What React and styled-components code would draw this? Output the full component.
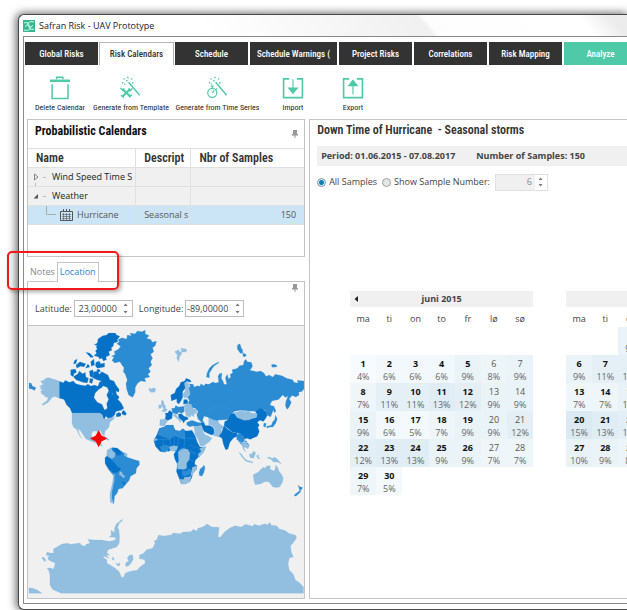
import React, { useState } from 'react';
import styled, { createGlobalStyle } from 'styled-components';

const GlobalStyle = createGlobalStyle`
    *{
        box-sizing: border-box;
    }
    body{
        margin: 0;
        background: #fff;
        overflow: hidden;
        font-family: "Open Sans", "Noto Sans", sans-serif;
        font-size: 9px;
        line-height: 12px;
        color: #444;
    }
    button, input{
        font: inherit;
        color: inherit;
        margin: 0;
        padding: 0;
        border: 0;
        background: none;
    }
    h1, h2, p{
        margin: 0;
    }
    svg{
        display: block;
    }
`

const headFont = '"Roboto Condensed", Roboto, sans-serif';
const green = '#4fcaa8';

const Page = styled.div`
    padding: 14px 0 2px 18px;
`

const Window = styled.div`
    min-height: calc(100vh - 16px);
    display: flex;
    flex-direction: column;
    padding: 0 0 5px 4px;
    border: 1px solid #484848;
    border-right: 0;
    border-radius: 6px 0 0 6px;
    background: #fff;
    box-shadow: -1px 0 8px 1px rgba(0, 0, 0, .6);
`

const TitleBar = styled.header`
    height: 21px;
    display: flex;
    align-items: center;
    gap: 4px;
    background: linear-gradient(50deg, #fff 30%, #f0f0f0 66%, #fdfdfd 67%, #fff 92%, #ececec 97%);
    h1{
        font-size: 9px;
        font-weight: 400;
        color: #222;
    }
`

const Client = styled.div`
    flex: 1;
    display: flex;
    flex-direction: column;
    border: 1px solid #8a8a8a;
    border-right: 0;
    padding: 5px 0 4px 0;
    background: #fff;
`

const TabBar = styled.nav`
    display: flex;
    gap: 2px;
    padding: 0 0 0 1px;
    overflow: hidden;
`

const Tab = styled.button`
    flex: none;
    width: ${({ $wide }) => ($wide ? 87 : 73)}px;
    height: 23px;
    overflow: hidden;
    white-space: nowrap;
    font-family: ${headFont};
    font-size: 9px;
    font-weight: 500;
    color: ${({ $active }) => ($active ? '#333' : '#fff')};
    background: ${({ $active, $accent }) => ($active ? '#fff' : $accent ? green : '#333')};
    box-shadow: ${({ $active }) => ($active ? 'inset 0 1px #b5b5b5, 0 0 0 1px #b5b5b5' : 'none')};
    clip-path: inset(0 -1px 0 -1px);
`

const Toolbar = styled.div`
    display: flex;
    padding: 11px 6px 5px;
    height: 54px;
`

const Tool = styled.button`
    flex: none;
    width: ${({ $width }) => $width}px;
    display: flex;
    flex-direction: column;
    align-items: center;
    gap: 2px;
    white-space: nowrap;
    font-family: ${headFont};
    font-size: 8px;
    color: #222;
`

const Workspace = styled.main`
    flex: 1;
    display: grid;
    grid-template-columns: minmax(0, 7fr) minmax(0, 8fr);
    gap: 4px;
    padding-left: 3px;
`

const Column = styled.div`
    display: flex;
    flex-direction: column;
`

const Panel = styled.section`
    border: 1px solid #c4c4c4;
    background: #fff;
    ${({ $grow }) => $grow && 'flex: 1;'}
    ${({ $open }) => $open && 'border-right: 0;'}
`

const PanelHead = styled.div`
    display: flex;
    align-items: center;
    justify-content: space-between;
    height: 28px;
    padding: 0 6px 7px 7px;
    h2{
        font-family: ${headFont};
        font-size: 12px;
        font-weight: 700;
        color: #111;
    }
    svg{
        margin-top: 6px;
    }
`

const TreeTable = styled.table`
    width: 100%;
    margin-bottom: 31px;
    table-layout: fixed;
    border-collapse: collapse;
    th, td{
        height: 19px;
        padding: 0 8px;
        overflow: hidden;
        white-space: nowrap;
        text-align: left;
        border: 1px solid #e0e0e0;
    }
    th{
        font-family: ${headFont};
        font-size: 12px;
        font-weight: 600;
        color: #333;
    }
    th:first-child, td:first-child{
        border-left: 0;
    }
    th:last-child, td:last-child{
        border-right: 0;
    }
    td:first-child{
        padding: 0;
    }
`

const TreeRow = styled.tr`
    background: ${({ $selected }) => ($selected ? '#cce5f6' : '#f0f0f0')};
    color: ${({ $selected }) => ($selected ? '#555' : '#222')};
    td:last-child{
        text-align: right;
    }
`

const TreeCell = styled.div`
    display: flex;
    align-items: center;
    gap: ${({ $child }) => ($child ? 4 : 0)}px;
    padding-left: ${({ $child }) => ($child ? 18 : 5)}px;
`

const Toggle = styled.button`
    display: flex;
    width: 19px;
`

const LowerTabs = styled.div`
    position: relative;
    display: flex;
    align-items: flex-end;
    height: 25px;
    margin-bottom: -1px;
    padding-left: 2px;
`

const LowerTab = styled.button`
    height: 20px;
    padding: 0 ${({ $active }) => ($active ? 2 : 0)}px 1px;
    margin-right: 1px;
    color: ${({ $active }) => ($active ? '#2a86d0' : '#888')};
    background: #fff;
    border: 1px solid ${({ $active }) => ($active ? '#c4c4c4' : 'transparent')};
    border-bottom: ${({ $active }) => ($active ? '0' : '1px solid #c4c4c4')};
`

const Callout = styled.div`
    position: absolute;
    left: -20px;
    top: -6px;
    width: 112px;
    height: 39px;
    border: 2px solid #f01818;
    border-radius: 5px;
    box-shadow: 2px 2px 4px rgba(0, 0, 0, .35);
    pointer-events: none;
`

const PinRow = styled.div`
    display: flex;
    justify-content: flex-end;
    padding: 2px 6px 0 0;
`

const CoordRow = styled.form`
    display: flex;
    align-items: center;
    gap: 2px;
    padding: 0 7px;
    height: 33px;
    label + div + label{
        margin-left: 4px;
    }
`

const SpinBox = styled.div`
    display: flex;
    flex: none;
    width: ${({ $small }) => ($small ? 53 : 59)}px;
    height: 17px;
    border: 1px solid ${({ $off }) => ($off ? '#e0e0e0' : '#bdbdbd')};
    background: ${({ $off }) => ($off ? '#f0f0f0' : '#fff')};
    color: ${({ $off }) => ($off ? '#888' : '#444')};
    input{
        flex: 1;
        min-width: 0;
        text-align: right;
        padding-right: 3px;
    }
`

const Arrows = styled.div`
    width: 12px;
    display: flex;
    flex-direction: column;
    background: #fff;
    button{
        flex: 1;
        display: flex;
        align-items: center;
        justify-content: center;
    }
`

const MapBox = styled.div`
    border-top: 1px solid #c4c4c4;
    background: #f0f0f0;
    svg{
        width: 100%;
    }
`

const Details = styled.div`
    padding: 4px 0 0 7px;
    overflow: hidden;
    h2{
        height: 22px;
        font-family: ${headFont};
        font-size: 12px;
        font-weight: 600;
        white-space: pre;
        color: #333;
    }
`

const PeriodBar = styled.div`
    display: flex;
    align-items: center;
    gap: 21px;
    height: 20px;
    padding-left: 4px;
    background: #f0f0f0;
    font-weight: 700;
    white-space: nowrap;
`

const SampleRow = styled.div`
    display: flex;
    align-items: center;
    height: 32px;
    gap: 5px;
`

const Choice = styled.label`
    display: flex;
    align-items: center;
    gap: 3px;
    white-space: nowrap;
`

const Radio = styled.input`
    appearance: none;
    width: 9px;
    height: 9px;
    border: 1px solid #a0a0a0;
    border-radius: 50%;
    background: #e6e6e6;
    &:checked{
        background: radial-gradient(circle, #0f7fb5 0 2px, #d9eef7 3px);
        border-color: #8496a3;
    }
`

const Calendars = styled.div`
    display: flex;
    gap: 33px;
    padding: 93px 0 0 33px;
`

const Month = styled.table`
    flex: none;
    width: 183px;
    table-layout: fixed;
    border-collapse: collapse;
    align-self: flex-start;
    text-align: center;
    caption{
        position: relative;
        height: 16px;
        line-height: 16px;
        background: #f0f0f0;
        font-weight: 700;
    }
    caption button{
        position: absolute;
        left: 4px;
        top: 5px;
    }
    th{
        height: 20px;
        padding: 4px 0 0;
        font-weight: 400;
    }
`

const Day = styled.td`
    height: 28px;
    padding: 2px 0 0;
    line-height: 13px;
    background: ${({ $shade }) => $shade};
    color: #666;
    b{
        display: block;
        font-weight: ${({ $weekend }) => ($weekend ? 400 : 700)};
        color: ${({ $weekend }) => ($weekend ? '#555' : '#111')};
    }
`

const TrashIcon = () => (
    <svg width="24" height="25" viewBox="0 0 24 25" fill="none" stroke={green} strokeWidth="1.6">
        <path d="M8.500 3.500V1.200h6.500v2.300" />
        <path d="M1.500 5h21" strokeWidth="2.600" />
        <path d="M3.800 8.500v15h16.500v-15" />
    </svg>
);

const Wand = () => (
    <>
        <path d="M9.500 6.500L21 20" strokeWidth="1.500" />
        <path d="M4 3h1.500M8 1.500h1.500M12 3h1.500M2.500 7H4M7 5h1.500M13 7h1.500M5 8.500h1" strokeWidth="1.500" />
    </>
);

const TemplateIcon = () => (
    <svg width="24" height="25" viewBox="0 0 24 25" fill="none" stroke={green}>
        <Wand />
        <path d="M3 13.500l8.500 8M11 13.500L3 21.500" strokeWidth="2.200" />
        <path d="M1 12.500l2.500 2.500 1.500-2M9.500 13l1.500 2.500 2.500-2.500M10 22l3-2.500M1.500 20l3 2.500" strokeWidth="1.400" />
    </svg>
);

const SeriesIcon = () => (
    <svg width="24" height="25" viewBox="0 0 24 25" fill="none" stroke={green}>
        <Wand />
        <circle cx="6" cy="17.500" r="4.700" strokeWidth="1.300" />
        <path d="M6 12.500v-2M4.500 10.500h3M6 17.500l2-2.500M10 13l1 1" strokeWidth="1.300" />
    </svg>
);

const BoxIcon = ({ up }) => (
    <svg width="24" height="25" viewBox="0 0 24 25" fill="none" stroke={green} strokeWidth="1.700">
        <path d="M8 3H2.200v19.500h19.600V3H16" />
        {up
            ? <path d="M12 19V9M12 4.500L7.500 10h9z" fill={green} strokeWidth="1.200" />
            : <path d="M12 3.500V13M12 18l-4.500-5.500h9z" fill={green} strokeWidth="1.200" />}
    </svg>
);

const AppIcon = () => (
    <svg width="12" height="12" viewBox="0 0 12 12" fill="none" stroke="#e8fff8" strokeWidth=".9">
        <path d="M0 0h12v12H0z" fill="#35b890" stroke="none" />
        <path d="M1 3c3-1 5-.5 5 3M11 2C8 1 5 2 4 5M11 9c-3 1-5 .5-5-3M1 10c3 1 6 0 7-3M2 6.500C4 5 5 5 6 6s2 1 4-.5" />
    </svg>
);

const PinIcon = () => (
    <svg width="6" height="8" viewBox="0 0 6 8" fill="#999">
        <path d="M1 0h4v4h1v1.500H3.500V8h-1V5.500H0V4h1z" />
    </svg>
);

const CalendarIcon = () => (
    <svg width="13" height="13" viewBox="0 0 13 13" fill="none" stroke="#555">
        <path d="M.5 2.500h12v9H.5z" />
        <path d="M3.500 0v3M6.500 0v3M9.500 0v3" />
        <path d="M2 5.500h9M2 7.500h9M2 9.500h9M3.500 4v7M6.500 4v7M9.500 4v7" strokeWidth=".6" />
    </svg>
);

const ExpandIcon = ({ open, last }) => (
    <svg width="19" height="18" viewBox="0 0 19 18" fill="none" stroke="#777">
        {open ? <path d="M5 7v4.500H.5z" fill="#555" stroke="none" /> : <path d="M1.500 6l3.500 3-3.500 3z" strokeWidth=".9" />}
        <path d="M10 9.500h3" stroke="#bbb" />
        {!last && <path d="M2.500 15v3" stroke="#bbb" />}
    </svg>
);

const BranchIcon = () => (
    <svg width="10" height="18" viewBox="0 0 10 18" fill="none" stroke="#aaa">
        <path d="M.5 0v8.500H10" />
    </svg>
);

const Caret = ({ down }) => (
    <svg width="5" height="3" viewBox="0 0 5 3" fill="#777">
        <path d={down ? 'M.5 0h4L2.500 2.500z' : 'M.5 3h4L2.500.5z'} />
    </svg>
);

const Spinner = ({ id, label, value, small, off }) => (
    <SpinBox $small={small} $off={off}>
        <input id={id} aria-label={label} defaultValue={value} disabled={off} />
        <Arrows>
            <button type="button" aria-label="Increase" disabled={off}><Caret /></button>
            <button type="button" aria-label="Decrease" disabled={off}><Caret down /></button>
        </Arrows>
    </SpinBox>
);

const light = '#92bfe0';
const mid = '#2b8cd3';
const dark = '#0572c8';

// each block is drawn at three units per map pixel, from its own origin
const americas = [
    [light, 'M118 181L108 176L95 173L90 170L78 171L72 177L62 181L66 187L72 189L58 196L64 199L60 204L68 206L62 212L66 220L72 222L76 228L84 230L82 238L66 250L70 253L84 245L92 236L97 229L106 227L118 232Z'],
    [mid, 'M27 185L34 187L37 195L48 200L44 209L34 204L27 203Z'],
    [dark, 'M118 181L130 185L136 178L148 184L160 180L168 188L182 192L196 194L204 189L212 195L224 192L234 196L238 184L245 180L252 190L246 200L236 206L226 216L222 230L232 244L246 250L254 267L262 262L260 248L266 236L260 222L266 210L274 213L280 222L288 224L294 236L304 246L312 262L304 268L288 272L284 282L276 290L264 292L258 286L252 297L246 282L238 276H156L150 262L140 252L132 236L118 232Z'],
    [dark, 'M288 280l8-6 8 4-2 8-12 2zM306 272l6-4 8 10-4 6-10-4zM222 152l12-2 4 10 8-8 18 10 6 14 12 4 6 12 10 14-2 8-8-4 2 10 8 8-4 8-12-8-4-10-10-4-6-14-14-6-4-14-14-4-12-6z'],
    [dark, 'M152 146l14-2 4 10-8 4-2 10-8-6zM162 166l12-8 4-8 10 8 8-4 2 14 8 4-4 14-14-2-10-4-8-2-8-8zM208 150l10-4 4 10-4 14-8-4zM210 172l10 2-4 14-8-4z'],
    [dark, 'M164 118l8-4-4 14-8 0zM168 132l12-10 10 4 8 2-6 10-10-2-12 6zM197 94l12 2 12 12-8 2zM212 122l10-8 2 18-10 4zM204 128l6 10-14 4zM228 124l10-4 4 8 12-2v12l-22 4-6-8zM230 146l8-2 4 10-10-2z'],
    [dark, 'M222 72l10-6 2-12 14-10 12-2 6-6 20 0 4 6 10 4-8 10 2 6-12 4-2 10-6 4 2 8-10 4 4 10-12 6 2 8-10 4-4-8-8 2-2-6-14-4 8-8-4-6 6-6-4-6 4-4-8-2z'],
    [mid, 'M282 92L296 84L302 76L290 68L298 62L294 56L306 50L320 54L322 42L334 44L330 36L346 38L352 30L366 32L376 27L376 38L388 44L380 52L394 56L396 64L410 60L406 74L398 80L402 92L392 100L398 112L392 122L396 132L386 142L392 152L384 160L390 168L374 172L378 182L362 180L352 188L346 200L346 214L338 230L326 222L320 204L318 188L322 178L316 160L310 152L312 140L304 130L300 122L284 126L276 118L282 108L274 106L286 100Z'],
    [light, 'M386 205l4-4 4 3 8-4 6 6-4 8-12 0z'],
    [light, 'M156 276H238L246 280L252 296L264 292L276 291L286 286L280 296L270 303L267 319L255 332L253 346L247 340L241 328L232 332L220 330L214 340L218 354L230 354L235 350L234 360L242 363L248 377L236 370L216 362L198 354L190 342L182 330L174 322L178 340L187 354L178 344L170 326L160 318L156 306Z'],
    [light, 'M246 347l8-1 14 10-2 3-14-7z'],
];

const southAmerica = [
    [mid, 'M336 20L352 21L364 32L378 38L382 49L398 54L418 60L419 71L410 82L408 97L392 106L388 118L376 132L368 142L356 144L352 156L344 166L342 188L332 182L331 160L338 140L341 104L326 86L316 68L315 52L322 42L322 28Z'],
    [dark, 'M336 20l14 1 16 11-2 10-10 2-10-8zM315 50l9-4 8 8 10 8 8 12 12 8-1 8-18 8-16-14-11-16zM368 120l9 6-2 6-8-4zM361 29l6 3 1 8-5-2z'],
    [light, 'M322 29l12-8 4 10 8 4-2 14-8 4-12-6-4-7zM341 97l3 3-1 20-4 18-3 16 0 18 6 16-10-4-2-16 1-16 7-28zM359 90l7 4 2 6 8 6-6 6-4-6-8-4zM373 34l10 6-4 8-6-4z'],
];

const antarctica = 'M184 457L170 451L158 446L150 432L150 402L146 388L141 383L148 380L160 384L164 374L166 367L158 363L146 357L143 349L150 346L138 342L141 333L150 336L161 336L160 324L171 318L186 309L202 307L211 310L240 306L245 313L257 316L258 310L270 307L264 295L283 297L306 297L324 301L336 300L344 297L349 291L342 289L328 288L334 282L333 267L343 275L344 261L349 249L358 242L368 234L367 239L358 247L353 260L357 266L359 288L358 307L350 318L334 323L324 326L321 335L329 343L318 342L328 352L310 345L312 351L321 356L321 366L334 374L345 381L357 391L366 410L372 407L376 396L394 390L411 388L420 378L436 366L434 356L419 353L418 343L431 337L440 326L458 322L466 306L462 300L470 297L476 282L492 285L516 281L519 276L542 278L549 273L573 272L580 265L591 270L594 262L608 258L622 249L636 258L658 259L655 288L661 289L674 273L690 261L705 254L724 258L737 250L758 256L763 250L778 254L793 248L804 251L809 244L815 253L830 254L839 264L858 269L865 276L888 283L890 292L880 306L872 314L875 335L881 347L868 352L865 369L868 387L880 399L887 417L900 426L911 438V457Z';

const southSeas = [
    [light, antarctica],
    [light, 'M87 440l14 3 12 5 14 9H87zM376 372l3-8 7-3-4-10 6-8 10-2 2 14-6 10-6 8-8 4zM125 350l6-2 7 10-4 4zM336 348l5 2 2 8-5-1zM346 364l7 6 5-6 2 10-8 0z'],
    [light, 'M760 101L776 93L780 88L790 79L796 82L800 75L812 74L810 84L822 90L826 84L828 72L834 80L837 90L845 100L850 110L848 124L840 137L830 140L818 137L812 128L806 122L794 122L784 128L766 131L762 118Z'],
    [mid, 'M894 131l6 6 8 2-2 6-6 6-2-8zM899 149l5 2-8 8-8 7-6-3z'],
    [light, 'M717 33l8 6 6 10 9 8 20 6-2 3-20-5-12-13zM748 40l8-2 6-8 6 6-3 6-4 10-10-2zM770 44l8-3-3 5 6 8-8-2zM801 50l8-2 8 4 8-3 8 6 12 14-12-6-12 0-8-8z'],
];

const eurasia = [
    [mid, 'M112 200L120 198L118 188L130 190L132 198L142 194L150 196L152 188L162 194L166 188L176 190L190 182L194 186L206 184L204 166L208 158L216 156L214 172L220 182L222 190L230 190L226 170L232 160L236 174L242 168L240 160L248 156L246 146L262 142L268 134L280 132L282 120L288 115L292 122L304 124L308 136L300 148L320 152L332 150L342 156L348 166L358 162L368 168L376 160L396 164L410 172L428 176L432 184L444 186L442 178L462 180V204L456 212L446 214L448 222L438 228L426 224L418 234L424 244L418 258L411 266L406 254L408 240L414 226L406 230L398 222L386 236L366 240L360 252L372 256L378 270L374 276L370 268L362 288L350 282L346 268L330 264L322 272L296 270L272 268L252 272L240 280L234 296L204 298L196 310L180 296L172 288L162 286L158 298L164 308L154 304L144 294L140 282L144 272L136 262L124 260L114 246L118 238L110 226L120 216Z'],
    [mid, 'M160 274L170 266L186 266L188 258L212 252L228 258L240 268L252 272L244 280L232 286L228 296L208 292L196 300L180 296L176 286L164 284Z'],
    [mid, 'M169 168l2-12 7-14 10-10 18-10 0 4-14 9-8 12-6 10 0 14zM262 72l8-4 4 14 4 4 0 12-8-2-8-12zM281 95l9 8-8 6-4-6zM364 131l6-1 10 2v6l-14 1z'],
    [light, 'M74 92l12-6 3 8 6-4 0 10-6 6-3 16-6-10 2-10zM92 82l16 2 3 6-9 4-6-2z'],
    [dark, 'M62 222l12-6 4-12 10-10 4-10 12-4 4-8 12 4 4 6-8 2-4-4-8 6 2 16-8 10 0 18-6 12-6 8-6-6 0-10-16 6zM101 236l11 0 2 12-14 2z'],
    [light, 'M103 186l9-4 4 8 1 12 4 18-8 10-10 1-5-9 8-14zM34 238l7 2 1 10 5 6-1 6 6 4-5 6-12 0 6-8-6-10zM26 252l8-1 0 10-8 2zM30 296l18-2 7 4-8 10-4 7-14-1z'],
    [mid, 'M64 263l10-2 3-8 8 5 17-2 1 16-7 5-9-3-6 6-13-4zM110 304l16-6 16 6 12 2 2 8-20 3-10-2-6 3-10-6z'],
    [dark, 'M45 276l8 0 5-8 10 7-2 18-12 5-9-4 2-10zM84 280l10-2 8 8 10 2 3 7-10 4-4 8-5-9-9-6z'],
    [light, 'M68 282l9-3 5 8 14 12-4 1-2 6-2-7-12-10zM102 254l10-6 12 2 4 12 12 4 0 12-8 0 0 10-8-6-4 8-12-6z'],
    [light, 'M132 318l18-4 8 8 2 12 8 10 6 0 3 3 9 4-7 11-19 14-9-1-7-19-9-16z'],
    [dark, 'M152 304l10 2 4 8 12 0 10 4 4 8 0 14-8 2-10-4-12-6-6-14z'],
    [light, 'M176 290l12 6 16 4 4 8 14 10-8 8 0 12-8 10-16-4 4-20-8-10-10 0z'],
    [dark, 'M222 314L232 324L248 334L262 336L260 348L252 350L240 364L234 384L227 387L220 370L216 352L206 346L214 336Z'],
    [dark, 'M232 298L240 280L252 276L262 290L284 298L318 290L320 280L316 272L330 261L338 264L348 272L352 284L346 294L340 302L330 298L322 304L328 312L324 320L328 332L322 346L300 356L292 352L286 354L278 348L270 338L248 334L232 322L222 314L224 302Z'],
    [light, 'M252 274l10 0 10-6 12 4 12-2 8 6 18 2-2 12-14 2-8 5-14 1-22-8z'],
    [mid, 'M260 342l8-6 8 6 10 10-4 6 10 4-4 4-8-4-6 10-8-12-6-4zM285 366l8 0 5 8-4 6-6-4zM376 282l3 6 3 6-5 14-8 10-12 1-6 3-1-6 14-3 5-12 5-4zM342 306l7 2-3 12-6-4z'],
    [light, 'M270 362l8 4 6-8 6 10 8 4-4 12-10-6-2 4 6 12-8-8-4-12z'],
    [mid, 'M150 444l6-4 6-8 3 8-3 14-6 12-8-2-1-9z'],
    [dark, 'M28 322L44 318L48 313L68 312L76 328L90 330L98 323L108 330L126 328L136 346L142 364L150 378L167 378L160 394L144 410L136 418L134 430L141 434L139 446L128 456L126 468L120 482L104 489L93 488L88 474L79 452L82 430L74 414L71 400L77 392L66 386L56 392L46 388L42 394L30 392L16 376L11 358L20 342Z'],
    [mid, 'M30 322l14-5 4-4 22-1 4 30-14 14-18-8-20-7zM74 328l14 4 10-8 6 4 1 26-8 0-24-10zM30 378l10-6 16 2-2 16-10 4-8-2zM98 448l10 4 6-8 10 2 0 8-8 8-16 4-4-8z'],
    [light, 'M56 378l14-4 14 2-4 12-10 4-10-5zM84 394l6-8 10-4 14 4 6 10-2 20-8 10 0 16-8 4-20-2 0-16 4-8zM148 384l6-4 13-3-5 14-16 20-2-12 10-8zM88 474l12 2 4-8 12 0 8-4-4 18-12 7-14 1zM126 440l14-6 0 12-10 10-4 10-4-6 4-14zM12 354l10-1 0 5-10 2z'],
];

const WorldMap = () => (
    <svg viewBox="28 325 276 272" role="img" aria-label="World map">
        <g stroke="#6aadde" strokeWidth=".4">
            <g transform="translate(20 320) scale(.333)">
                {americas.map(([fill, d]) => <path key={d} fill={fill} d={d} />)}
            </g>
            <g transform="translate(0 440) scale(.333)">
                {southAmerica.map(([fill, d]) => <path key={d} fill={fill} d={d} />)}
                {southSeas.map(([fill, d]) => <path key={d} fill={fill} d={d} />)}
            </g>
            <g transform="translate(150 320) scale(.333)">
                {eurasia.map(([fill, d]) => <path key={d} fill={fill} d={d} />)}
                <path
                    d="M36 352l6 22M60 356l2 20M74 344l-2 30M86 350l-4 26M104 352l-2 32M104 352h32M120 372l26 10M118 394l20 2M120 416l14 8M22 356h38M82 392l20-8M120 384l16 20"
                    fill="none"
                    stroke="#3b90d6"
                    strokeWidth="1.500"
                />
            </g>
        </g>
        <path d="M98.600 430l2.500 5 5 2.500-5 2.500-2.500 5-2.500-5-5-2.500 5-2.500z" fill="#f00" stroke="#f00" />
    </svg>
);

const tabs = ['Global Risks', 'Risk Calendars', 'Schedule', 'Schedule Warnings (', 'Project Risks', 'Correlations', 'Risk Mapping', 'Analyze'];

const tools = [
    { label: 'Delete Calendar', width: 60, icon: <TrashIcon /> },
    { label: 'Generate from Template', width: 82, icon: <TemplateIcon /> },
    { label: 'Generate from Time Series', width: 91, icon: <SeriesIcon /> },
    { label: 'Import', width: 60, icon: <BoxIcon /> },
    { label: 'Export', width: 60, icon: <BoxIcon up /> },
];

const weekdays = ['ma', 'ti', 'on', 'to', 'fr', 'lø', 'sø'];

const june = {
    offset: 0,
    risk: [4, 6, 6, 6, 9, 8, 9, 7, 11, 11, 13, 12, 9, 9, 9, 6, 5, 7, 9, 9, 12, 12, 13, 13, 9, 9, 7, 7, 7, 5],
};

const july = {
    offset: 2,
    risk: [9, 8, 9, 9, 8, 9, 11, 11, 9, 9, 8, 9, 7, 7, 10, 9, 9, 8, 9, 15, 13, 12, 10, 9, 9, 9, 10, 9, 8, 9, 9],
};

const shadeOf = (risk) => {
    const t = (risk - 4) / 11;
    return `rgb(${Math.round(247 - t * 28)}, ${Math.round(251 - t * 17)}, ${Math.round(253 - t * 11)})`;
};

const toWeeks = ({ offset, risk }) => {
    const cells = [...Array(offset).fill(null), ...risk.map((r, i) => ({ day: i + 1, risk: r }))];
    const weeks = [];
    for (let i = 0; i < cells.length; i += 7) {
        weeks.push(cells.slice(i, i + 7));
    }
    return weeks;
};

const MonthTable = ({ title, data, back }) => (
    <Month>
        <caption>
            {back && (
                <button type="button" aria-label="Previous month">
                    <svg width="4" height="6" viewBox="0 0 4 6" fill="#222"><path d="M4 0v6L.5 3z" /></svg>
                </button>
            )}
            {title}
        </caption>
        <thead>
            <tr>{weekdays.map((d) => <th key={d} scope="col">{d}</th>)}</tr>
        </thead>
        <tbody>
            {data.offset === 0 && <tr><Day colSpan={7} /></tr>}
            {toWeeks(data).map((week, w) => (
                <tr key={w}>
                    {week.map((cell, i) => (cell
                        ? <Day key={i} $shade={shadeOf(cell.risk)} $weekend={i > 4}><b>{cell.day}</b>{cell.risk}%</Day>
                        : <Day key={i} />
                    ))}
                </tr>
            ))}
        </tbody>
    </Month>
);

const CalendarPanel = () => (
    <Panel>
        <PanelHead>
            <h2>Probabilistic Calendars</h2>
            <PinIcon />
        </PanelHead>
        <TreeTable>
            <colgroup>
                <col width="39%" />
                <col width="20%" />
                <col />
            </colgroup>
            <thead>
                <tr>
                    <th scope="col">Name</th>
                    <th scope="col">Descript</th>
                    <th scope="col">Nbr of Samples</th>
                </tr>
            </thead>
            <tbody>
                <TreeRow>
                    <td><TreeCell><Toggle aria-label="Expand"><ExpandIcon /></Toggle>Wind Speed Time S</TreeCell></td>
                    <td />
                    <td />
                </TreeRow>
                <TreeRow>
                    <td><TreeCell><Toggle aria-label="Collapse"><ExpandIcon open last /></Toggle>Weather</TreeCell></td>
                    <td />
                    <td />
                </TreeRow>
                <TreeRow $selected>
                    <td><TreeCell $child><BranchIcon /><CalendarIcon />Hurricane</TreeCell></td>
                    <td>Seasonal s</td>
                    <td>150</td>
                </TreeRow>
            </tbody>
        </TreeTable>
    </Panel>
);

const LocationPanel = () => (
    <Panel $grow>
        <PinRow><PinIcon /></PinRow>
        <CoordRow>
            <label htmlFor="lat">Latitude:</label>
            <Spinner id="lat" value="23,00000" />
            <label htmlFor="lng">Longitude:</label>
            <Spinner id="lng" value="-89,00000" />
        </CoordRow>
        <MapBox><WorldMap /></MapBox>
    </Panel>
);

const DetailPanel = () => {
    const [mode, setMode] = useState('all');
    return (
        <Panel $open>
            <Details>
                <h2>Down Time of Hurricane  - Seasonal storms</h2>
                <PeriodBar>
                    <span>Period: 01.06.2015 - 07.08.2017</span>
                    <span>Number of Samples: 150</span>
                </PeriodBar>
                <SampleRow>
                    <Choice>
                        <Radio type="radio" name="mode" checked={mode === 'all'} onChange={() => setMode('all')} />
                        All Samples
                    </Choice>
                    <Choice>
                        <Radio type="radio" name="mode" checked={mode === 'one'} onChange={() => setMode('one')} />
                        Show Sample Number:
                    </Choice>
                    <Spinner label="Sample number" value="6" small off={mode === 'all'} />
                </SampleRow>
                <Calendars>
                    <MonthTable title="juni 2015" data={june} back />
                    <MonthTable title="juli 2015" data={july} />
                </Calendars>
            </Details>
        </Panel>
    );
};

export default function App() {
    const [tab, setTab] = useState('Risk Calendars');
    return (
        <Page>
            <GlobalStyle />
            <Window>
                <TitleBar>
                    <AppIcon />
                    <h1>Safran Risk - UAV Prototype</h1>
                </TitleBar>
                <Client>
                    <TabBar>
                        {tabs.map((t) => (
                            <Tab
                                key={t}
                                $active={t === tab}
                                $accent={t === 'Analyze'}
                                $wide={t.startsWith('Schedule W')}
                                onClick={() => setTab(t)}
                            >
                                {t}
                            </Tab>
                        ))}
                    </TabBar>
                    <Toolbar>
                        {tools.map(({ label, width, icon }) => (
                            <Tool key={label} $width={width}>
                                {icon}
                                {label}
                            </Tool>
                        ))}
                    </Toolbar>
                    <Workspace>
                        <Column>
                            <CalendarPanel />
                            <LowerTabs>
                                <LowerTab>Notes</LowerTab>
                                <LowerTab $active>Location</LowerTab>
                                <Callout />
                            </LowerTabs>
                            <LocationPanel />
                        </Column>
                        <DetailPanel />
                    </Workspace>
                </Client>
            </Window>
        </Page>
    );
}
